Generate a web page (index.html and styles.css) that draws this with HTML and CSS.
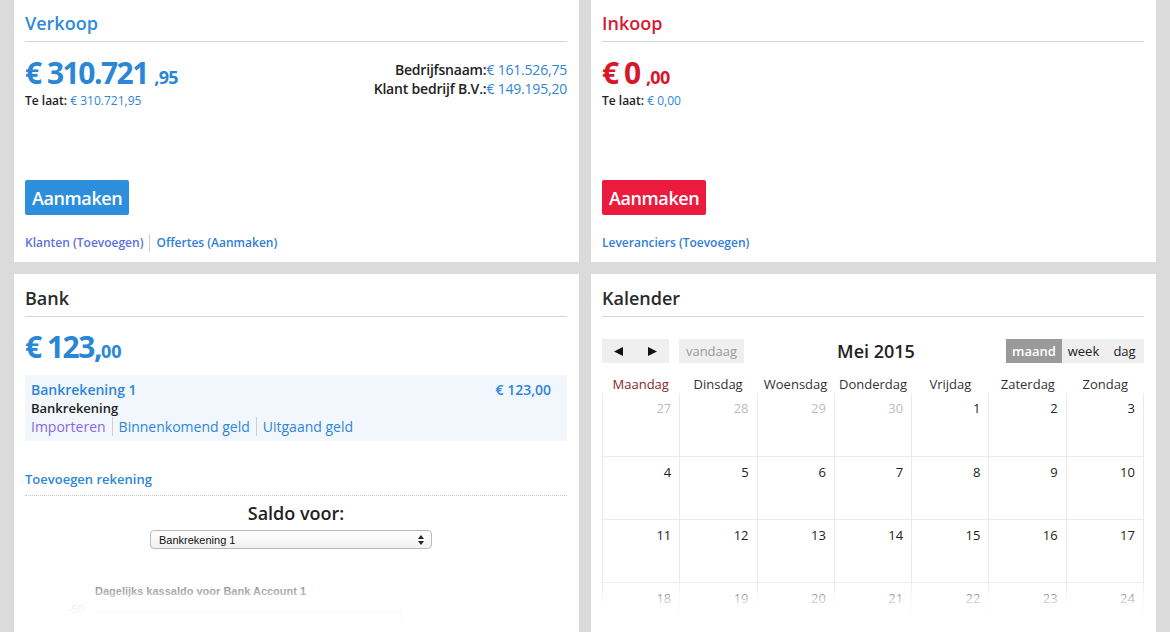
FILE: index.html
```html
<!DOCTYPE html>
<html lang="nl">
<head>
<meta charset="utf-8">
<title>Dashboard</title>
<link rel="stylesheet" href="styles.css">
</head>
<body>
<div class="dashboard">
  <section class="panel panel-top">
    <h2 class="panel-title title-blue">Verkoop</h2>
    <div class="summary">
      <div>
        <div class="amount amount-blue">€ 310.721 <span class="cents">,95</span></div>
        <div class="late"><b>Te laat:</b> <span class="val">€ 310.721,95</span></div>
      </div>
      <div class="breakdown">
        <div><b>Bedrijfsnaam:</b><span class="val">€ 161.526,75</span></div>
        <div><b>Klant bedrijf B.V.:</b><span class="val">€ 149.195,20</span></div>
      </div>
    </div>
    <div class="panel-foot">
      <a class="btn btn-blue">Aanmaken</a>
      <div class="links">
        <a class="visited">Klanten (Toevoegen)</a><span class="sep"></span><a>Offertes (Aanmaken)</a>
      </div>
    </div>
  </section>

  <section class="panel panel-top">
    <h2 class="panel-title title-red">Inkoop</h2>
    <div class="summary">
      <div>
        <div class="amount amount-red">€ 0 <span class="cents">,00</span></div>
        <div class="late"><b>Te laat:</b> <span class="val">€ 0,00</span></div>
      </div>
    </div>
    <div class="panel-foot">
      <a class="btn btn-red">Aanmaken</a>
      <div class="links">
        <a>Leveranciers (Toevoegen)</a>
      </div>
    </div>
  </section>

  <section class="panel panel-bottom">
    <h2 class="panel-title">Bank</h2>
    <div class="amount amount-blue bank-amount">€ 123,<span class="cents">00</span></div>
    <div class="account">
      <div class="account-head"><span>Bankrekening 1</span><span>€ 123,00</span></div>
      <div class="account-type">Bankrekening</div>
      <div class="account-links"><a class="visited2">Importeren</a><span class="sep"></span><a>Binnenkomend geld</a><span class="sep"></span><a>Uitgaand geld</a></div>
    </div>
    <div class="add-account"><a>Toevoegen rekening</a></div>
    <div class="saldo">Saldo voor:</div>
    <div class="select-wrap">
      <div class="fake-select">
        <span>Bankrekening 1</span>
        <svg width="6" height="10" viewBox="0 0 6 10"><polygon points="3,0 6,4 0,4" fill="#222"/><polygon points="0,6 6,6 3,10" fill="#222"/></svg>
      </div>
    </div>
    <svg class="chart" width="542" height="60" viewBox="0 0 542 60">
      <text x="70" y="21" class="chart-title">Dagelijks kassaldo voor Bank Account 1</text>
      <text x="59" y="39" class="chart-axis" text-anchor="end">-50</text>
      <line x1="70" y1="37.5" x2="380" y2="37.5" stroke="#d8d8d8" stroke-width="1"/>
      <line x1="375.5" y1="38" x2="375.5" y2="50" stroke="#c8c8c8" stroke-width="1"/>
    </svg>
  </section>

  <section class="panel panel-bottom">
    <h2 class="panel-title">Kalender</h2>
    <div class="cal-toolbar">
      <div class="cal-left">
        <div class="btn-group">
          <span class="cal-btn nav"><svg width="9" height="9" viewBox="0 0 9 9"><polygon points="0,4.5 9,0 9,9" fill="#111"/></svg></span><span class="cal-btn nav"><svg width="9" height="9" viewBox="0 0 9 9"><polygon points="0,0 9,4.5 0,9" fill="#111"/></svg></span>
        </div>
        <span class="cal-btn today">vandaag</span>
      </div>
      <div class="cal-title">Mei 2015</div>
      <div class="cal-right">
        <span class="cal-btn active">maand</span><span class="cal-btn">week</span><span class="cal-btn">dag</span>
      </div>
    </div>
    <div class="cal-head">
      <div class="monday">Maandag</div><div>Dinsdag</div><div>Woensdag</div><div>Donderdag</div><div>Vrijdag</div><div>Zaterdag</div><div>Zondag</div>
    </div>
    <div class="cal-grid">
      <div class="day other">27</div><div class="day other">28</div><div class="day other">29</div><div class="day other">30</div><div class="day">1</div><div class="day">2</div><div class="day">3</div>
      <div class="day">4</div><div class="day">5</div><div class="day">6</div><div class="day">7</div><div class="day">8</div><div class="day">9</div><div class="day">10</div>
      <div class="day">11</div><div class="day">12</div><div class="day">13</div><div class="day">14</div><div class="day">15</div><div class="day">16</div><div class="day">17</div>
      <div class="day">18</div><div class="day">19</div><div class="day">20</div><div class="day">21</div><div class="day">22</div><div class="day">23</div><div class="day">24</div>
    </div>
  </section>
</div>
</body>
</html>
```

FILE: styles.css
```css
* { box-sizing: border-box; }

html, body {
  margin: 0;
  height: 632px;
  overflow: hidden;
}

body {
  background: #dbdbdb;
  font-family: "Open Sans", "Noto Sans", sans-serif;
  color: #222;
}

a { cursor: pointer; text-decoration: none; }

.dashboard {
  display: grid;
  grid-template-columns: 565px 565px;
  grid-template-rows: 263px 370px;
  column-gap: 12px;
  row-gap: 12px;
  padding: 0 14px;
  margin-top: -1px;
}

.panel {
  background: #fff;
  padding: 11px 12px 10px 11px;
  display: flex;
  flex-direction: column;
  position: relative;
  overflow: hidden;
}

.panel-title {
  margin: 0;
  font-size: 18px;
  line-height: 26px;
  font-weight: 600;
  color: #2a2a2a;
  padding-bottom: 5px;
  border-bottom: 1px solid #d4d4d4;
}
.title-blue { color: #2f8ad9; }
.title-red { color: #d9192f; }

.summary {
  display: flex;
  justify-content: space-between;
  margin-top: 14px;
}

.amount {
  font-size: 30px;
  line-height: 34px;
  font-weight: 700;
  letter-spacing: -1.5px;
}
.amount .cents {
  font-size: 18px;
  line-height: 1;
  letter-spacing: -0.7px;
}
.amount-blue { color: #2a87d6; }
.amount-red { color: #d8162c; }

.late {
  margin-top: 3px;
  font-size: 12px;
  line-height: 16px;
  color: #222;
}
.late b { font-weight: 600; }
.val { color: #2f86d6; font-weight: 400; }

.breakdown {
  padding-top: 4px;
  text-align: right;
  font-size: 14px;
  line-height: 19px;
  letter-spacing: -0.2px;
}
.breakdown b { font-weight: 600; color: #222; }

.panel-foot {
  margin-top: auto;
}

.btn {
  display: inline-flex;
  align-items: center;
  height: 35px;
  padding: 0 7px;
  border-radius: 2px;
  color: #fff;
  font-size: 18px;
  font-weight: 600;
  letter-spacing: -0.4px;
}
.btn-blue { background: #2d8fdc; }
.btn-red { background: #ea1b3d; }

.links {
  margin-top: 19px;
  height: 18px;
  font-size: 12px;
  line-height: 16px;
  font-weight: 600;
  display: flex;
  align-items: center;
}
.links a { color: #2f80d6; }
.links a.visited { color: #5b72dc; }
.sep {
  display: inline-block;
  width: 1px;
  height: 18px;
  background: #d0d0d0;
  margin: 0 6px;
}

/* Bank */
.bank-amount {
  margin-top: 13px;
  letter-spacing: -1.5px;
}
.bank-amount .cents { letter-spacing: 0; }

.account {
  margin-top: 11px;
  background: #f1f7fc;
  padding: 6px 16px 5px 6px;
  font-size: 14px;
  line-height: 18px;
}
.account-head {
  display: flex;
  justify-content: space-between;
  font-weight: 600;
  color: #2f86d6;
}
.account-type {
  font-size: 13px;
  font-weight: 600;
  color: #222;
}
.account-links {
  display: flex;
  align-items: center;
}
.account-links a { color: #2f86d6; }
.account-links a.visited2 { color: #8a66e2; }
.account-links .sep { height: 19px; margin: 0 6px; }

.add-account {
  margin-top: 29px;
  padding-bottom: 7px;
  border-bottom: 1px dotted #c8c8c8;
  font-size: 13px;
  line-height: 18px;
  font-weight: 600;
}
.add-account a { color: #2f86d6; }

.saldo {
  margin-top: 5px;
  text-align: center;
  font-size: 18px;
  line-height: 24px;
  font-weight: 600;
  color: #222;
}

.select-wrap {
  margin-top: 5px;
  display: flex;
  justify-content: center;
  padding-right: 10px;
}
.fake-select {
  width: 282px;
  height: 19px;
  border: 1px solid #b9b9b9;
  border-radius: 4px;
  background: linear-gradient(#ffffff, #f1f1f1);
  display: flex;
  align-items: center;
  justify-content: space-between;
  padding: 0 7px 0 8px;
  font-family: "Liberation Sans", Arial, sans-serif;
  font-size: 11px;
  color: #111;
}

.chart {
  display: block;
  flex-shrink: 0;
  margin-top: 25px;
}
.chart-title {
  font-family: "Liberation Sans", Arial, sans-serif;
  font-size: 11px;
  font-weight: 700;
  fill: #6e6e6e;
}
.chart-axis {
  font-family: "Liberation Sans", Arial, sans-serif;
  font-size: 11px;
  fill: #888;
}

.panel-bottom::after {
  content: "";
  position: absolute;
  left: 0;
  right: 0;
  top: 306px;
  height: 52px;
  background: linear-gradient(rgba(255,255,255,0) 0%, rgba(255,255,255,0.45) 23%, rgba(255,255,255,0.78) 40%, rgba(255,255,255,0.93) 67%, #fff 92%);
  pointer-events: none;
}

/* Calendar */
.cal-toolbar {
  margin-top: 22px;
  display: grid;
  grid-template-columns: 1fr auto 1fr;
  align-items: center;
  height: 24px;
}
.cal-left { display: flex; }
.cal-right { display: flex; justify-content: flex-end; }
.btn-group { display: flex; }
.cal-btn {
  display: inline-flex;
  align-items: center;
  justify-content: center;
  height: 24px;
  background: #efefef;
  font-size: 13px;
  color: #222;
  padding: 0 7px;
}
.cal-btn.nav { width: 33.5px; padding: 0; }
.cal-btn.today {
  margin-left: 10px;
  width: 65px;
  color: #999;
}
.cal-btn.active {
  background: #9a9a9a;
  color: #fff;
  font-weight: 600;
  width: 56px;
}
.cal-right .cal-btn:nth-child(2) { width: 43px; }
.cal-right .cal-btn:nth-child(3) { width: 39px; }
.cal-title {
  font-size: 18px;
  line-height: 24px;
  font-weight: 600;
  color: #222;
  padding-left: 6px;
}

.cal-head {
  margin-top: 12px;
  display: grid;
  grid-template-columns: repeat(7, 1fr);
  font-size: 13px;
  line-height: 18px;
  text-align: center;
  color: #333;
}
.cal-head .monday { color: #862828; }

.cal-grid {
  display: grid;
  grid-template-columns: repeat(7, 1fr);
  grid-template-rows: 64px 63px 63px 63px;
  border-right: 1px solid #ebebeb;
}
.day {
  border-left: 1px solid #ebebeb;
  border-bottom: 1px solid #ebebeb;
  text-align: right;
  font-size: 13px;
  line-height: 18px;
  padding: 6px 8px 0 0;
  color: #222;
}
.day.other { color: #bdbdbd; }
```
